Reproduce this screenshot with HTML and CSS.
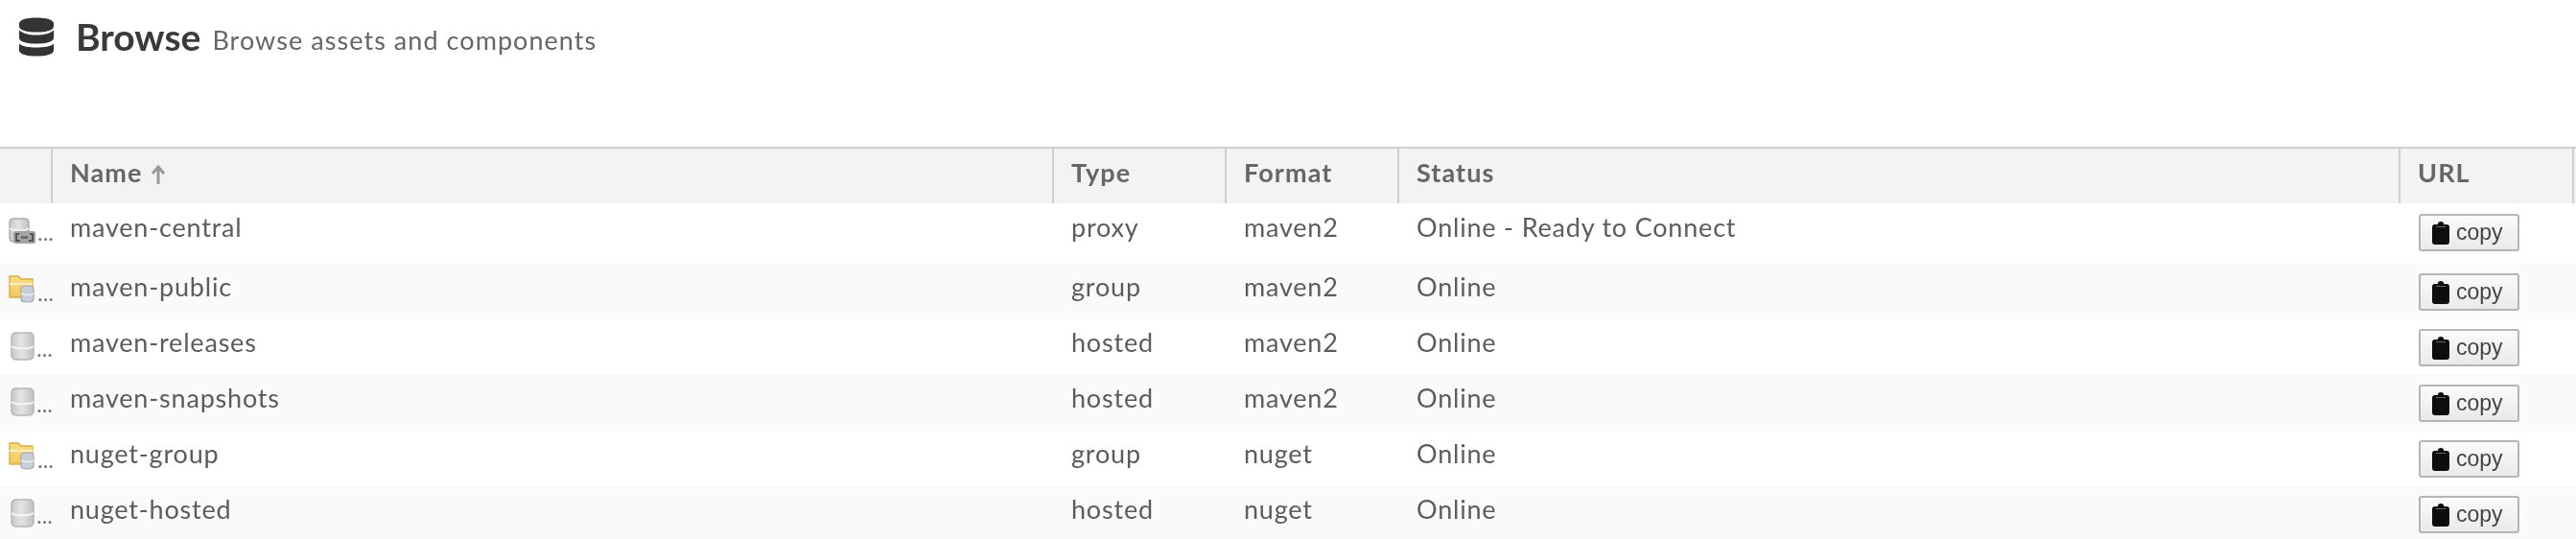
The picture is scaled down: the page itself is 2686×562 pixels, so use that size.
FILE: index.html
```html
<!DOCTYPE html>
<html lang="en">
<head>
<meta charset="utf-8">
<title>Browse</title>
<link rel="stylesheet" href="styles.css">
</head>
<body>
<svg class="defs" width="0" height="0" aria-hidden="true">
  <defs>
    <linearGradient id="cyl" x1="0" y1="0" x2="1" y2="0">
      <stop offset="0" stop-color="#c8c8c8"/><stop offset=".45" stop-color="#e4e4e4"/><stop offset="1" stop-color="#c0c0c0"/>
    </linearGradient>
    <linearGradient id="fold" x1="0" y1="0" x2="0" y2="1">
      <stop offset="0" stop-color="#f7dd82"/><stop offset="1" stop-color="#f2c95c"/>
    </linearGradient>
    <symbol id="db" viewBox="0 0 25 30">
      <path d="M1 6c0-3 2-5 5-5h13c3 0 5 2 5 5v18c0 3-2 5-5 5H6c-3 0-5-2-5-5z" fill="url(#cyl)" stroke="#b5b5b5" stroke-width="1.4"/>
      <path d="M1 15c3 3 20 3 23 0" fill="none" stroke="#f4f4f4" stroke-width="2"/>
    </symbol>
    <symbol id="group" viewBox="0 0 28 30">
      <path d="M1 2h9l3 3h12v19H1z" fill="url(#fold)" stroke="#dcae44" stroke-width="1.4"/>
      <path d="M1 10h24" stroke="#fbeeb8" stroke-width="2.4"/>
      <path d="M13 15c0-2 2-3 6-3s7 1 7 3v11c0 2-3 3-7 3s-6-1-6-3z" fill="#c9ced9" stroke="#a2a7b1" stroke-width="1.2"/>
      <path d="M13 20c2 2 11 2 13 0" fill="none" stroke="#eef0f4" stroke-width="1.4"/>
    </symbol>
    <symbol id="proxy" viewBox="0 0 28 27">
      <path d="M1 5c0-3 2-4 5-4h10c3 0 5 1 5 4v16c0 3-2 4-5 4H6c-3 0-5-1-5-4z" fill="url(#cyl)" stroke="#aaa" stroke-width="1.4"/>
      <path d="M1 11c3 3 17 3 20 0" fill="none" stroke="#efefef" stroke-width="1.8"/>
      <rect x="5" y="14" width="23" height="13" rx="2.5" fill="#a3a3a3"/>
      <path d="M11 17H8v7h4M22 17h3v7h-4M13 20.500h7" fill="none" stroke="#555" stroke-width="2"/>
    </symbol>
    <symbol id="clip" viewBox="0 0 20 24">
      <path d="M7 3V2c0-1 1-2 3-2s3 1 3 2v1h3c2 0 3 1 3 3v15c0 2-1 3-3 3H4c-2 0-3-1-3-3V6c0-2 1-3 3-3z" fill="#0d0d0d"/>
      <path d="M5 5.500h10" stroke="#666" stroke-width="1"/>
    </symbol>
  </defs>
</svg>

<header class="page-head">
  <svg class="head-icon" viewBox="0 0 36 40" aria-hidden="true">
    <path d="M0 6c0-4 8-6 18-6s18 2 18 6v3c0 4-8 6-18 6S0 13 0 9z" fill="#333"/>
    <path d="M0 13c3 3 10 5 18 5s15-2 18-5v8c0 4-8 6-18 6S0 25 0 21z" fill="#333"/>
    <path d="M0 27c3 3 10 4 18 4s15-1 18-4v7c0 4-8 6-18 6S0 38 0 34z" fill="#333"/>
  </svg>
  <h1 class="head-title">Browse</h1>
  <span class="head-sub">Browse assets and components</span>
</header>

<main class="grid">
  <div class="row row-head">
    <div class="hcell"></div>
    <div class="hcell">Name <svg class="sort" viewBox="0 0 14 20" aria-hidden="true"><path d="M7 20V3M1 9l6-7 6 7" fill="none" stroke="#999" stroke-width="3"/></svg></div>
    <div class="hcell">Type</div>
    <div class="hcell">Format</div>
    <div class="hcell">Status</div>
    <div class="hcell">URL</div>
    <div class="hfill"></div>
  </div>

  <div class="row row-first">
    <div class="cell-icon"><svg class="ic ic-proxy"><use href="#proxy"/></svg><span class="dots">...</span></div>
    <div class="cell">maven-central</div><div class="cell">proxy</div><div class="cell">maven2</div><div class="cell">Online - Ready to Connect</div>
    <div class="cell-btn"><button class="copy"><svg class="clip"><use href="#clip"/></svg>copy</button></div>
  </div>
  <div class="row row-alt">
    <div class="cell-icon"><svg class="ic ic-group"><use href="#group"/></svg><span class="dots">...</span></div>
    <div class="cell">maven-public</div><div class="cell">group</div><div class="cell">maven2</div><div class="cell">Online</div>
    <div class="cell-btn"><button class="copy"><svg class="clip"><use href="#clip"/></svg>copy</button></div>
  </div>
  <div class="row">
    <div class="cell-icon"><svg class="ic ic-db"><use href="#db"/></svg><span class="dots">...</span></div>
    <div class="cell">maven-releases</div><div class="cell">hosted</div><div class="cell">maven2</div><div class="cell">Online</div>
    <div class="cell-btn"><button class="copy"><svg class="clip"><use href="#clip"/></svg>copy</button></div>
  </div>
  <div class="row row-alt">
    <div class="cell-icon"><svg class="ic ic-db"><use href="#db"/></svg><span class="dots">...</span></div>
    <div class="cell">maven-snapshots</div><div class="cell">hosted</div><div class="cell">maven2</div><div class="cell">Online</div>
    <div class="cell-btn"><button class="copy"><svg class="clip"><use href="#clip"/></svg>copy</button></div>
  </div>
  <div class="row">
    <div class="cell-icon"><svg class="ic ic-group"><use href="#group"/></svg><span class="dots">...</span></div>
    <div class="cell">nuget-group</div><div class="cell">group</div><div class="cell">nuget</div><div class="cell">Online</div>
    <div class="cell-btn"><button class="copy"><svg class="clip"><use href="#clip"/></svg>copy</button></div>
  </div>
  <div class="row row-alt">
    <div class="cell-icon"><svg class="ic ic-db"><use href="#db"/></svg><span class="dots">...</span></div>
    <div class="cell">nuget-hosted</div><div class="cell">hosted</div><div class="cell">nuget</div><div class="cell">Online</div>
    <div class="cell-btn"><button class="copy"><svg class="clip"><use href="#clip"/></svg>copy</button></div>
  </div>
</main>
</body>
</html>
```

FILE: styles.css
```css
* { box-sizing: border-box; }
html, body { margin: 0; padding: 0; background: #fff; }
body {
  height: 562px;
  overflow: hidden;
  font-family: Lato, "Open Sans", sans-serif;
  color: #555;
  filter: blur(0.6px);
}
.defs { position: absolute; }

.page-head {
  height: 153px;
  display: flex;
  align-items: flex-start;
  padding: 18px 0 0 20px;
}
.head-icon { width: 36px; height: 41px; flex: none; margin-right: 23px; }
.head-title {
  margin: 0 12px 0 0;
  font-size: 39px;
  line-height: 40px;
  font-weight: 700;
  color: #3a3a3a;
}
.head-sub {
  font-size: 27px;
  line-height: 40px;
  margin-top: 4px;
  letter-spacing: 1.05px;
  color: #666;
}

.grid { border-top: 2px solid #cfcfcf; }
.row {
  display: grid;
  grid-template-columns: 55px 1044px 180px 180px 1044px 181px 1fr;
  height: 58px;
  background: #fff;
}
.row-alt { background: #fafafa; }
.row-first { height: 63px; }
.row-head { height: 57px; background: #f3f3f3; }

.hcell {
  border-right: 2px solid #cfcfcf;
  padding: 10px 0 0 18px;
  font-size: 27px;
  line-height: 30px;
  letter-spacing: 1.1px;
  font-weight: 700;
  color: #666;
}
.sort { width: 14px; height: 20px; vertical-align: -2px; margin-left: 2px; }

.cell {
  padding: 9px 0 0 18px;
  font-size: 27px;
  line-height: 30px;
  letter-spacing: 0.8px;
  color: #5c5c5c;
  white-space: nowrap;
}
.row-first .cell { padding-top: 10px; }

.cell-icon {
  display: flex;
  align-items: flex-start;
  padding: 13px 0 0 9px;
}
.ic { flex: none; }
.ic-db { width: 25px; height: 30px; margin-left: 2px; margin-right: 2px; }
.ic-group { width: 28px; height: 30px; margin-top: -2px; margin-right: 2px; }
.ic-proxy { width: 28px; height: 27px; margin-top: 2px; margin-right: 2px; }
.dots { font-size: 24px; line-height: 30px; color: #777; margin-top: 2px; }

.cell-btn { padding: 10px 0 0 19px; }
.row-first .cell-btn { padding-top: 11px; }
.copy {
  width: 105px;
  height: 39px;
  padding: 0 0 0 11px;
  display: flex;
  align-items: center;
  border: 2px solid #b5b5b5;
  border-radius: 3px;
  background: linear-gradient(#fbfbfb, #e9e9e9);
  font-family: "Liberation Sans", sans-serif;
  font-size: 23px;
  color: #444;
}
.clip { width: 20px; height: 24px; margin-right: 6px; flex: none; }
```
